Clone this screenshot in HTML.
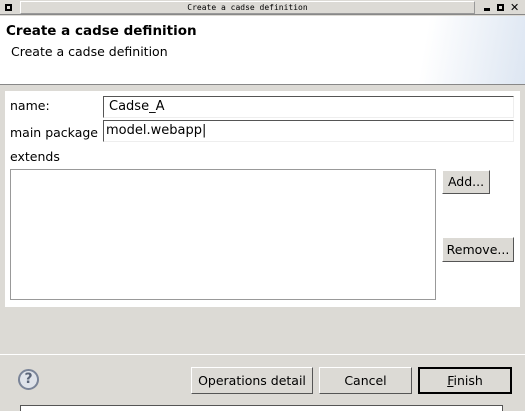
<!DOCTYPE html>
<html><head><style>
*{margin:0;padding:0;box-sizing:border-box}
body{width:525px;height:411px;background:#dcdad5;font-family:"DejaVu Sans","Liberation Sans",sans-serif;font-size:12.5px;color:#000;position:relative;overflow:hidden}
.a{position:absolute}
.btn{position:absolute;background:#dcdad5;border:1px solid;border-color:#fff #555 #555 #fff;text-align:center;font-size:12.5px}
.fld{position:absolute;background:#fff;border:1px solid;border-color:#555 #eee #eee #555;padding-left:5px;font-size:13px}
</style></head><body>
<div class="a" style="left:0;top:0;width:525px;height:15px;background:#dcdad5;border-bottom:1px solid #888"></div>
<div class="a" style="left:20px;top:1px;width:455px;height:13px;border:1px solid;border-color:#fff #999 #999 #fff;text-align:center;font-family:'DejaVu Sans Mono',monospace;font-size:8px;line-height:11px">Create a cadse definition</div>
<div class="a" style="left:5px;top:4px;width:7px;height:7px;border:2px solid #000"></div>
<div class="a" style="left:484px;top:8px;width:6px;height:3px;background:#000"></div>
<div class="a" style="left:497px;top:4px;width:7px;height:7px;border:2px solid #000"></div>
<div class="a" style="left:510px;top:1px;font-size:11px;font-weight:bold">✕</div>
<div class="a" style="left:0;top:16px;width:525px;height:68px;background:linear-gradient(100deg,#fff 80%,#dde6f2 100%)"></div>
<div class="a" style="left:0;top:84px;width:525px;height:1px;background:#888"></div>
<div class="a" style="left:6px;top:23px;font-weight:bold;font-size:13.5px">Create a cadse definition</div>
<div class="a" style="left:11px;top:44px">Create a cadse definition</div>
<div class="a" style="left:5px;top:91px;width:515px;height:216px;background:#fff"></div>
<div class="a" style="left:10px;top:98px">name:</div>
<div class="fld" style="left:103px;top:96px;width:411px;height:22px;line-height:20px">Cadse_A</div>
<div class="a" style="left:10px;top:125px">main package</div>
<div class="fld" style="left:103px;top:120px;width:411px;height:22px;line-height:20px;padding-left:2px">model.webapp|</div>
<div class="a" style="left:10px;top:149px">extends</div>
<div class="a" style="left:10px;top:169px;width:426px;height:131px;border:1px solid #999;background:#fff"></div>
<div class="btn" style="left:442px;top:170px;width:48px;height:24px;line-height:22px">Add...</div>
<div class="btn" style="left:442px;top:237px;width:72px;height:25px;line-height:23px">Remove...</div>
<div class="a" style="left:0;top:354px;width:525px;height:1px;background:#999;border-bottom:1px solid #fff"></div>
<div class="a" style="left:18px;top:369px;width:21px;height:21px;border-radius:50%;background:#dfe3ea;border:2px solid #7a8498;text-align:center;font-weight:bold;font-size:14px;line-height:17px;color:#5a6478">?</div>
<div class="btn" style="left:191px;top:367px;width:122px;height:27px;line-height:25px">Operations detail</div>
<div class="btn" style="left:319px;top:367px;width:93px;height:27px;line-height:25px">Cancel</div>
<div class="btn" style="left:418px;top:367px;width:94px;height:27px;line-height:23px;border:2px solid #000"><u>F</u>inish</div>
<div class="a" style="left:20px;top:405px;width:483px;height:6px;border:1px solid #555;border-bottom:none;background:#fff"></div>
</body></html>
